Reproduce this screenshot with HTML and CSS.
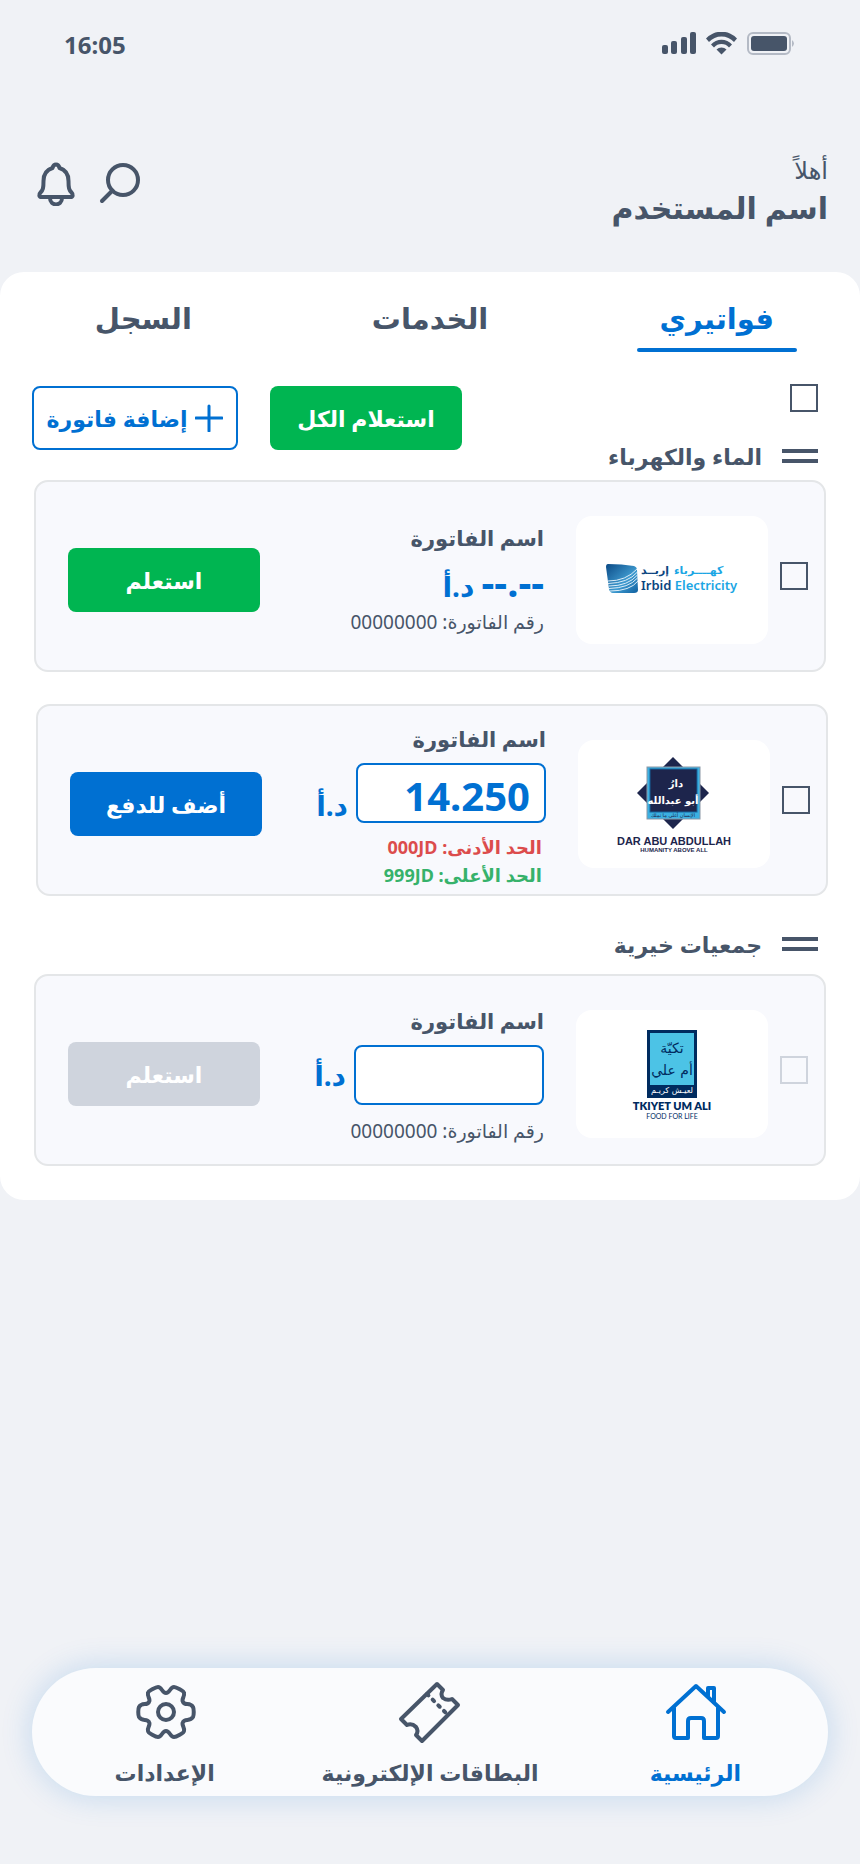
FILE: index.html
```
<!DOCTYPE html>
<html lang="ar" dir="rtl">
<head>
    <meta charset="UTF-8">
    <meta name="viewport" content="width=device-width, initial-scale=1.0">
    <title>فواتيري</title>
    <link rel="stylesheet" href="styles.css">
</head>
<body>
    <!-- Status bar -->
    <div class="status-bar" dir="ltr">
        <span class="status-time">16:05</span>
        <svg class="status-icons" width="134" height="24" viewBox="0 0 134 24" fill="#475569" aria-hidden="true">
            <rect x="0" y="13" width="6" height="9" rx="2"/>
            <rect x="9" y="9" width="6" height="13" rx="2"/>
            <rect x="19" y="5" width="6" height="17" rx="2"/>
            <rect x="28" y="0" width="6" height="22" rx="2"/>
            <path d="M44 6.500 A21 21 0 0 1 75 6.500 L72 10 A17 17 0 0 0 47 10 Z"/>
            <path d="M49 12.500 A14 14 0 0 1 70 12.500 L67 15.500 A10 10 0 0 0 52 15.500 Z"/>
            <path d="M54.500 17.500 A7 7 0 0 1 64.500 17.500 L59.500 22.500 Z"/>
            <rect x="86" y="1" width="42" height="21" rx="5" fill="none" stroke="#b4bac5" stroke-width="2"/>
            <rect x="89" y="4" width="36" height="15" rx="3"/>
            <path d="M130 8 Q134 11.500 130 15 Z" fill="#b4bac5"/>
        </svg>
    </div>

    <!-- Header -->
    <header class="header">
        <div class="greeting">
            <p class="greeting-hello">أهلاً</p>
            <h1 class="greeting-name">اسم المستخدم</h1>
        </div>
        <div class="header-actions">
            <button class="icon-btn" type="button" aria-label="بحث">
                <svg width="44" height="44" viewBox="0 0 44 44" fill="none" stroke="#475569" stroke-width="4" stroke-linecap="round">
                    <circle cx="25" cy="18" r="15"/>
                    <path d="M14.500 28.500 L4 39"/>
                </svg>
            </button>
            <button class="icon-btn" type="button" aria-label="الإشعارات">
                <svg width="44" height="44" viewBox="0 0 44 44" fill="none" stroke="#475569" stroke-width="4" stroke-linecap="round" stroke-linejoin="round">
                    <path d="M22 2.500 C19.500 2.500 19 4 18.500 6 C12 8 9.500 13 9.500 19 C9.500 26 9 28 6.500 30.500 C4.500 32.500 5 35 7.500 35 H36.500 C39 35 39.500 32.500 37.500 30.500 C35 28 34.500 26 34.500 19 C34.500 13 32 8 25.500 6 C25 4 24.500 2.500 22 2.500 Z"/>
                    <path d="M16 36 C16 44.500 28 44.500 28 36"/>
                </svg>
            </button>
        </div>
    </header>

    <!-- Bills -->
    <main class="panel">
        <nav class="tabs">
            <a href="#bills" class="tab active">فواتيري</a>
            <a href="#services" class="tab">الخدمات</a>
            <a href="#history" class="tab">السجل</a>
        </nav>

        <div class="toolbar">
            <div class="toolbar-side">
                <input type="checkbox" class="check check-all" aria-label="تحديد الكل">
                <h2 class="group-title"><span class="grip"></span>الماء والكهرباء</h2>
            </div>
            <div class="toolbar-actions">
                <button class="btn btn-green" type="button">استعلام الكل</button>
                <button class="btn btn-outline" type="button">
                    <svg width="28" height="28" viewBox="0 0 28 28" stroke="#0070d2" stroke-width="3" stroke-linecap="round" aria-hidden="true">
                        <path d="M14 2 V27 M1 14 H27"/>
                    </svg>
                    إضافة فاتورة
                </button>
            </div>
        </div>

        <section class="bill-list">
            <article class="bill">
                <input type="checkbox" class="check" aria-label="كهرباء إربد">
                <div class="bill-logo">
                    <svg width="192" height="128" viewBox="0 0 192 128" direction="ltr" role="img" aria-label="Irbid Electricity">
                        <defs>
                            <linearGradient id="irbid" x1="0" y1="0" x2="1" y2="1">
                                <stop offset="0" stop-color="#0b4a86"/>
                                <stop offset="0.600" stop-color="#3f9bd0"/>
                                <stop offset="1" stop-color="#0f5f9f"/>
                            </linearGradient>
                        </defs>
                        <path d="M32 48 Q46 48 58 50 Q61 51 61 54 L62 74 Q62 77 58 77 H37 Q34 77 33 73 L30 51 Q30 48 32 48 Z" fill="url(#irbid)"/>
                        <g fill="none" stroke="#dcedf8" stroke-width="1">
                            <path d="M32 65 Q50 65 61 53"/>
                            <path d="M32 67.500 Q52 67 61.500 56"/>
                            <path d="M33 70 Q52 70 61.500 59"/>
                            <path d="M33 72.500 Q53 72 61.500 62"/>
                            <path d="M34 75 Q54 75 62 65"/>
                        </g>
                        <text x="65" y="58" class="irbid-ar irbid-dark">إربــد</text>
                        <text x="98" y="58" class="irbid-ar irbid-light">كهــــرباء</text>
                        <text x="65" y="74" class="irbid-en"><tspan class="irbid-dark">Irbid</tspan> <tspan class="irbid-light">Electricity</tspan></text>
                    </svg>
                </div>
                <div class="bill-info">
                    <h3 class="bill-name">اسم الفاتورة</h3>
                    <p class="bill-amount"><span class="dashes">--.--</span> د.أ</p>
                    <p class="bill-number">رقم الفاتورة: 00000000</p>
                </div>
                <button class="btn btn-green" type="button">استعلم</button>
            </article>

            <article class="bill bill-shifted">
                <input type="checkbox" class="check" aria-label="دار أبو عبدالله">
                <div class="bill-logo">
                    <svg width="192" height="128" viewBox="0 0 192 128" direction="ltr" role="img" aria-label="Dar Abu Abdullah">
                        <path d="M95 17 L131 53 L95 89 L59 53 Z" fill="#1d254c"/>
                        <rect x="69" y="27" width="53" height="52" fill="#3bb0e2" stroke="#8b97a6"/>
                        <rect x="72" y="29" width="47" height="43" fill="#1d254c" stroke="#17639a"/>
                        <text x="98" y="47" class="dar-script">دارُ</text>
                        <text x="95" y="64" class="dar-script">أبو عبدالله</text>
                        <text x="95" y="77" class="dar-motto">الإنسان أغلى ما نملك</text>
                        <text x="96" y="105" class="dar-title">DAR ABU ABDULLAH</text>
                        <text x="96" y="112" class="dar-sub">HUMANITY ABOVE ALL</text>
                    </svg>
                </div>
                <div class="bill-info bill-info-entry">
                    <h3 class="bill-name">اسم الفاتورة</h3>
                    <div class="bill-entry bill-entry-filled">
                        <input type="text" class="amount-input" value="14.250" dir="ltr" aria-label="المبلغ">
                        <span class="currency">د.أ</span>
                    </div>
                    <p class="bill-limit limit-min">الحد الأدنى: <bdi>000JD</bdi></p>
                    <p class="bill-limit limit-max">الحد الأعلى: <bdi>999JD</bdi></p>
                </div>
                <button class="btn btn-blue" type="button">أضف للدفع</button>
            </article>
        </section>

        <h2 class="group-title group-charity"><span class="grip"></span>جمعيات خيرية</h2>

        <section class="bill-list">
            <article class="bill">
                <input type="checkbox" class="check" aria-label="تكية أم علي" disabled>
                <div class="bill-logo">
                    <svg width="192" height="128" viewBox="0 0 192 128" direction="ltr" role="img" aria-label="Tkiyet Um Ali">
                        <rect x="71" y="20" width="50" height="68" fill="#002b5f"/>
                        <rect x="74" y="23" width="44" height="52" fill="#4cc3e6"/>
                        <text x="96" y="43" class="tkiyet-script">تكيّة</text>
                        <text x="96" y="65" class="tkiyet-script">أم علي</text>
                        <text x="96" y="83" class="tkiyet-motto">لعيـش كريـم</text>
                        <text x="96" y="100" class="tkiyet-title">TKIYET UM ALI</text>
                        <text x="96" y="109" class="tkiyet-sub">FOOD FOR LIFE</text>
                    </svg>
                </div>
                <div class="bill-info bill-info-entry">
                    <h3 class="bill-name">اسم الفاتورة</h3>
                    <div class="bill-entry">
                        <input type="text" class="amount-input" dir="ltr" aria-label="المبلغ">
                        <span class="currency">د.أ</span>
                    </div>
                    <p class="bill-number">رقم الفاتورة: 00000000</p>
                </div>
                <button class="btn btn-green" type="button" disabled>استعلم</button>
            </article>
        </section>
    </main>

    <!-- Bottom navigation -->
    <nav class="bottom-nav">
        <a href="#home" class="nav-item active">
            <svg width="64" height="64" viewBox="0 0 64 64" fill="none" stroke="currentColor" stroke-width="4" stroke-linecap="round" stroke-linejoin="round" aria-hidden="true">
                <path d="M5 32 L33 6 L61 32"/>
                <path d="M11 28 V56 Q11 58 13 58 H25 V41 Q25 38 28 38 H38 Q41 38 41 41 V58 H53 Q55 58 55 56 V28"/>
                <path d="M45 16 V8 H51 V22"/>
            </svg>
            الرئيسية
        </a>
        <a href="#cards" class="nav-item">
            <svg width="64" height="64" viewBox="0 0 64 64" fill="none" stroke="currentColor" stroke-width="4" stroke-linejoin="round" aria-hidden="true">
                <path d="M3 39 L39 4 L45 10 Q42 14 45 18 Q49 21 54 19 L60 25 L24 61 L18 55 Q21 51 18 47 Q14 43 9 45 Z"/>
                <path d="M29 14 L48 33" stroke-linecap="round" stroke-dasharray="2 6"/>
            </svg>
            البطاقات الإلكترونية
        </a>
        <a href="#settings" class="nav-item">
            <svg width="64" height="64" viewBox="0 0 64 64" fill="none" stroke="currentColor" stroke-width="4" stroke-linejoin="round" aria-hidden="true">
                <circle cx="33" cy="32" r="8"/>
                <path d="M33 13 C37 13 37 7 41 7 C43 7 51 11 51 13 C52 17 48 19 50 22 C52 26 57 22 60 27 C61 29 61 35 60 37 C57 42 52 38 50 42 C48 45 52 47 51 51 C51 53 43 57 41 57 C37 57 37 51 33 51 C29 51 29 57 25 57 C23 57 15 53 15 51 C14 47 18 45 16 42 C14 38 9 42 6 37 C5 35 5 29 6 27 C9 22 14 26 16 22 C18 19 14 17 15 13 C15 11 23 7 25 7 C29 7 29 13 33 13 Z"/>
            </svg>
            الإعدادات
        </a>
    </nav>
</body>
</html>
```
FILE: styles.css
```
* { margin: 0; padding: 0; box-sizing: border-box; }

body {
    min-height: 100vh;
    display: flex;
    flex-direction: column;
    background: #f0f2f6;
    color: #475569;
    font-family: "Noto Sans", "DejaVu Sans", sans-serif;
}

button, input { font-family: inherit; }
a { color: inherit; text-decoration: none; }
svg { display: block; flex-shrink: 0; }

/* Status bar */
.status-bar { display: flex; justify-content: space-between; align-items: center; height: 88px; padding: 0 64px; }
.status-time { font-size: 24px; font-weight: 700; }

/* Header */
.header { display: flex; justify-content: space-between; align-items: flex-start; height: 184px; padding: 64px 32px 0 34px; }
.greeting-hello { font-size: 24px; line-height: 36px; }
.greeting-name { font-size: 30px; line-height: 40px; font-weight: 700; }
.header-actions { display: flex; gap: 20px; padding-top: 10px; }
.icon-btn { border: none; background: none; cursor: pointer; }

/* Panel */
.panel { background: #fff; border-radius: 24px; padding: 16px 0 34px; }
.tabs { display: grid; grid-template-columns: repeat(3, 1fr); }
.tab { justify-self: center; width: 160px; height: 64px; line-height: 60px; text-align: center; font-size: 29px; font-weight: 700; white-space: nowrap; }
.tab.active { color: #0070d2; }
.tab.active::after { content: ""; display: block; height: 4px; border-radius: 2px; background: #0070d2; }

.toolbar { display: flex; justify-content: space-between; padding: 32px 42px 8px 32px; }
.toolbar-side { display: flex; flex-direction: column; gap: 28px; }
.toolbar-actions { display: flex; align-items: flex-start; gap: 32px; padding-top: 2px; }

.group-title { display: flex; align-items: center; gap: 20px; font-size: 22px; line-height: 32px; font-weight: 700; }
.group-charity { padding: 32px 42px 14px; }
.grip { width: 36px; height: 14px; border: solid #475569; border-width: 4px 0; }

.check { appearance: none; flex-shrink: 0; width: 28px; height: 28px; border: 2px solid #475569; }
.check:checked { background: #475569; }
.check:disabled { border-color: #cfd4dd; }

.btn { display: flex; align-items: center; justify-content: center; gap: 8px; width: 192px; height: 64px; border: none; border-radius: 8px; color: #fff; font-size: 22px; font-weight: 700; white-space: nowrap; cursor: pointer; }
.btn-green { background: #00b551; }
.btn-blue { background: #0070d2; }
.btn-outline { width: 206px; background: #fff; color: #0070d2; border: 2px solid #0070d2; }
.btn:disabled { background: #cfd4dd; cursor: default; }

/* Bill cards */
.bill-list { display: flex; flex-direction: column; gap: 32px; padding: 0 34px; }
.bill { display: flex; align-items: center; height: 192px; padding: 8px 16px 0 32px; background: #f8f9fd; border: 2px solid #e4e6e8; border-radius: 14px; }
.bill-shifted { margin: 0 -2px 0 2px; }
.bill .check { margin-bottom: 8px; }
.bill-logo { margin: 0 12px 0 32px; border-radius: 16px; background: #fff; }
.bill-info { flex: 1; white-space: nowrap; }
.bill-info-entry { padding-top: 4px; }
.bill-name { margin-bottom: 8px; font-size: 21px; line-height: 32px; font-weight: 700; }
.bill-amount { color: #0070d2; font-size: 28px; line-height: 40px; font-weight: 700; }
.dashes { font-size: 40px; }
.bill-number { font-size: 19px; line-height: 32px; }
.bill-entry { display: flex; align-items: center; gap: 8px; margin: 6px 0 10px; }
.bill-entry-filled { align-items: flex-end; }
.amount-input { width: 190px; height: 60px; padding: 4px 14px 0; border: 2px solid #0070d2; border-radius: 8px; background: #fff; color: #0070d2; font-size: 40px; font-weight: 700; text-align: right; }
.currency { color: #0070d2; font-size: 28px; line-height: 36px; font-weight: 700; }
.bill-limit { padding-right: 4px; font-size: 18px; line-height: 28px; font-weight: 700; }
.limit-min { color: #dc4c4c; }
.limit-max { color: #36b26b; }

/* Logos */
.irbid-ar { font: 700 11px "DejaVu Sans", sans-serif; }
.irbid-en { font: 600 13px "Noto Sans", sans-serif; }
.irbid-dark { fill: #0b4580; }
.irbid-light { fill: #1ba6e4; }
.dar-script, .dar-motto, .dar-title, .dar-sub, .tkiyet-script, .tkiyet-motto, .tkiyet-title, .tkiyet-sub { text-anchor: middle; }
.dar-script { font: 700 10px "DejaVu Sans", sans-serif; fill: #fff; }
.dar-motto { font: 5px "DejaVu Sans", sans-serif; fill: #1d254c; }
.dar-title { font: 700 11px "Liberation Sans", sans-serif; fill: #1d254c; }
.dar-sub { font: 700 6px "Liberation Sans", sans-serif; fill: #1d254c; }
.tkiyet-script { font: 14px "DejaVu Sans", sans-serif; fill: #002b5f; }
.tkiyet-motto { font: 8px "DejaVu Sans", sans-serif; fill: #fff; }
.tkiyet-title { font: 800 11px Lato, sans-serif; fill: #002b5f; }
.tkiyet-sub { font: 7px Lato, sans-serif; fill: #002b5f; }

/* Bottom navigation */
.bottom-nav { display: grid; grid-template-columns: repeat(3, 1fr); height: 128px; margin: auto 32px 68px; border-radius: 64px; background: #fafbfd; box-shadow: 0 0 32px rgba(0, 112, 210, 0.2); }
.nav-item { display: flex; flex-direction: column; align-items: center; padding-top: 12px; font-size: 22px; line-height: 56px; font-weight: 700; white-space: nowrap; }
.nav-item.active { color: #0070d2; }
```
